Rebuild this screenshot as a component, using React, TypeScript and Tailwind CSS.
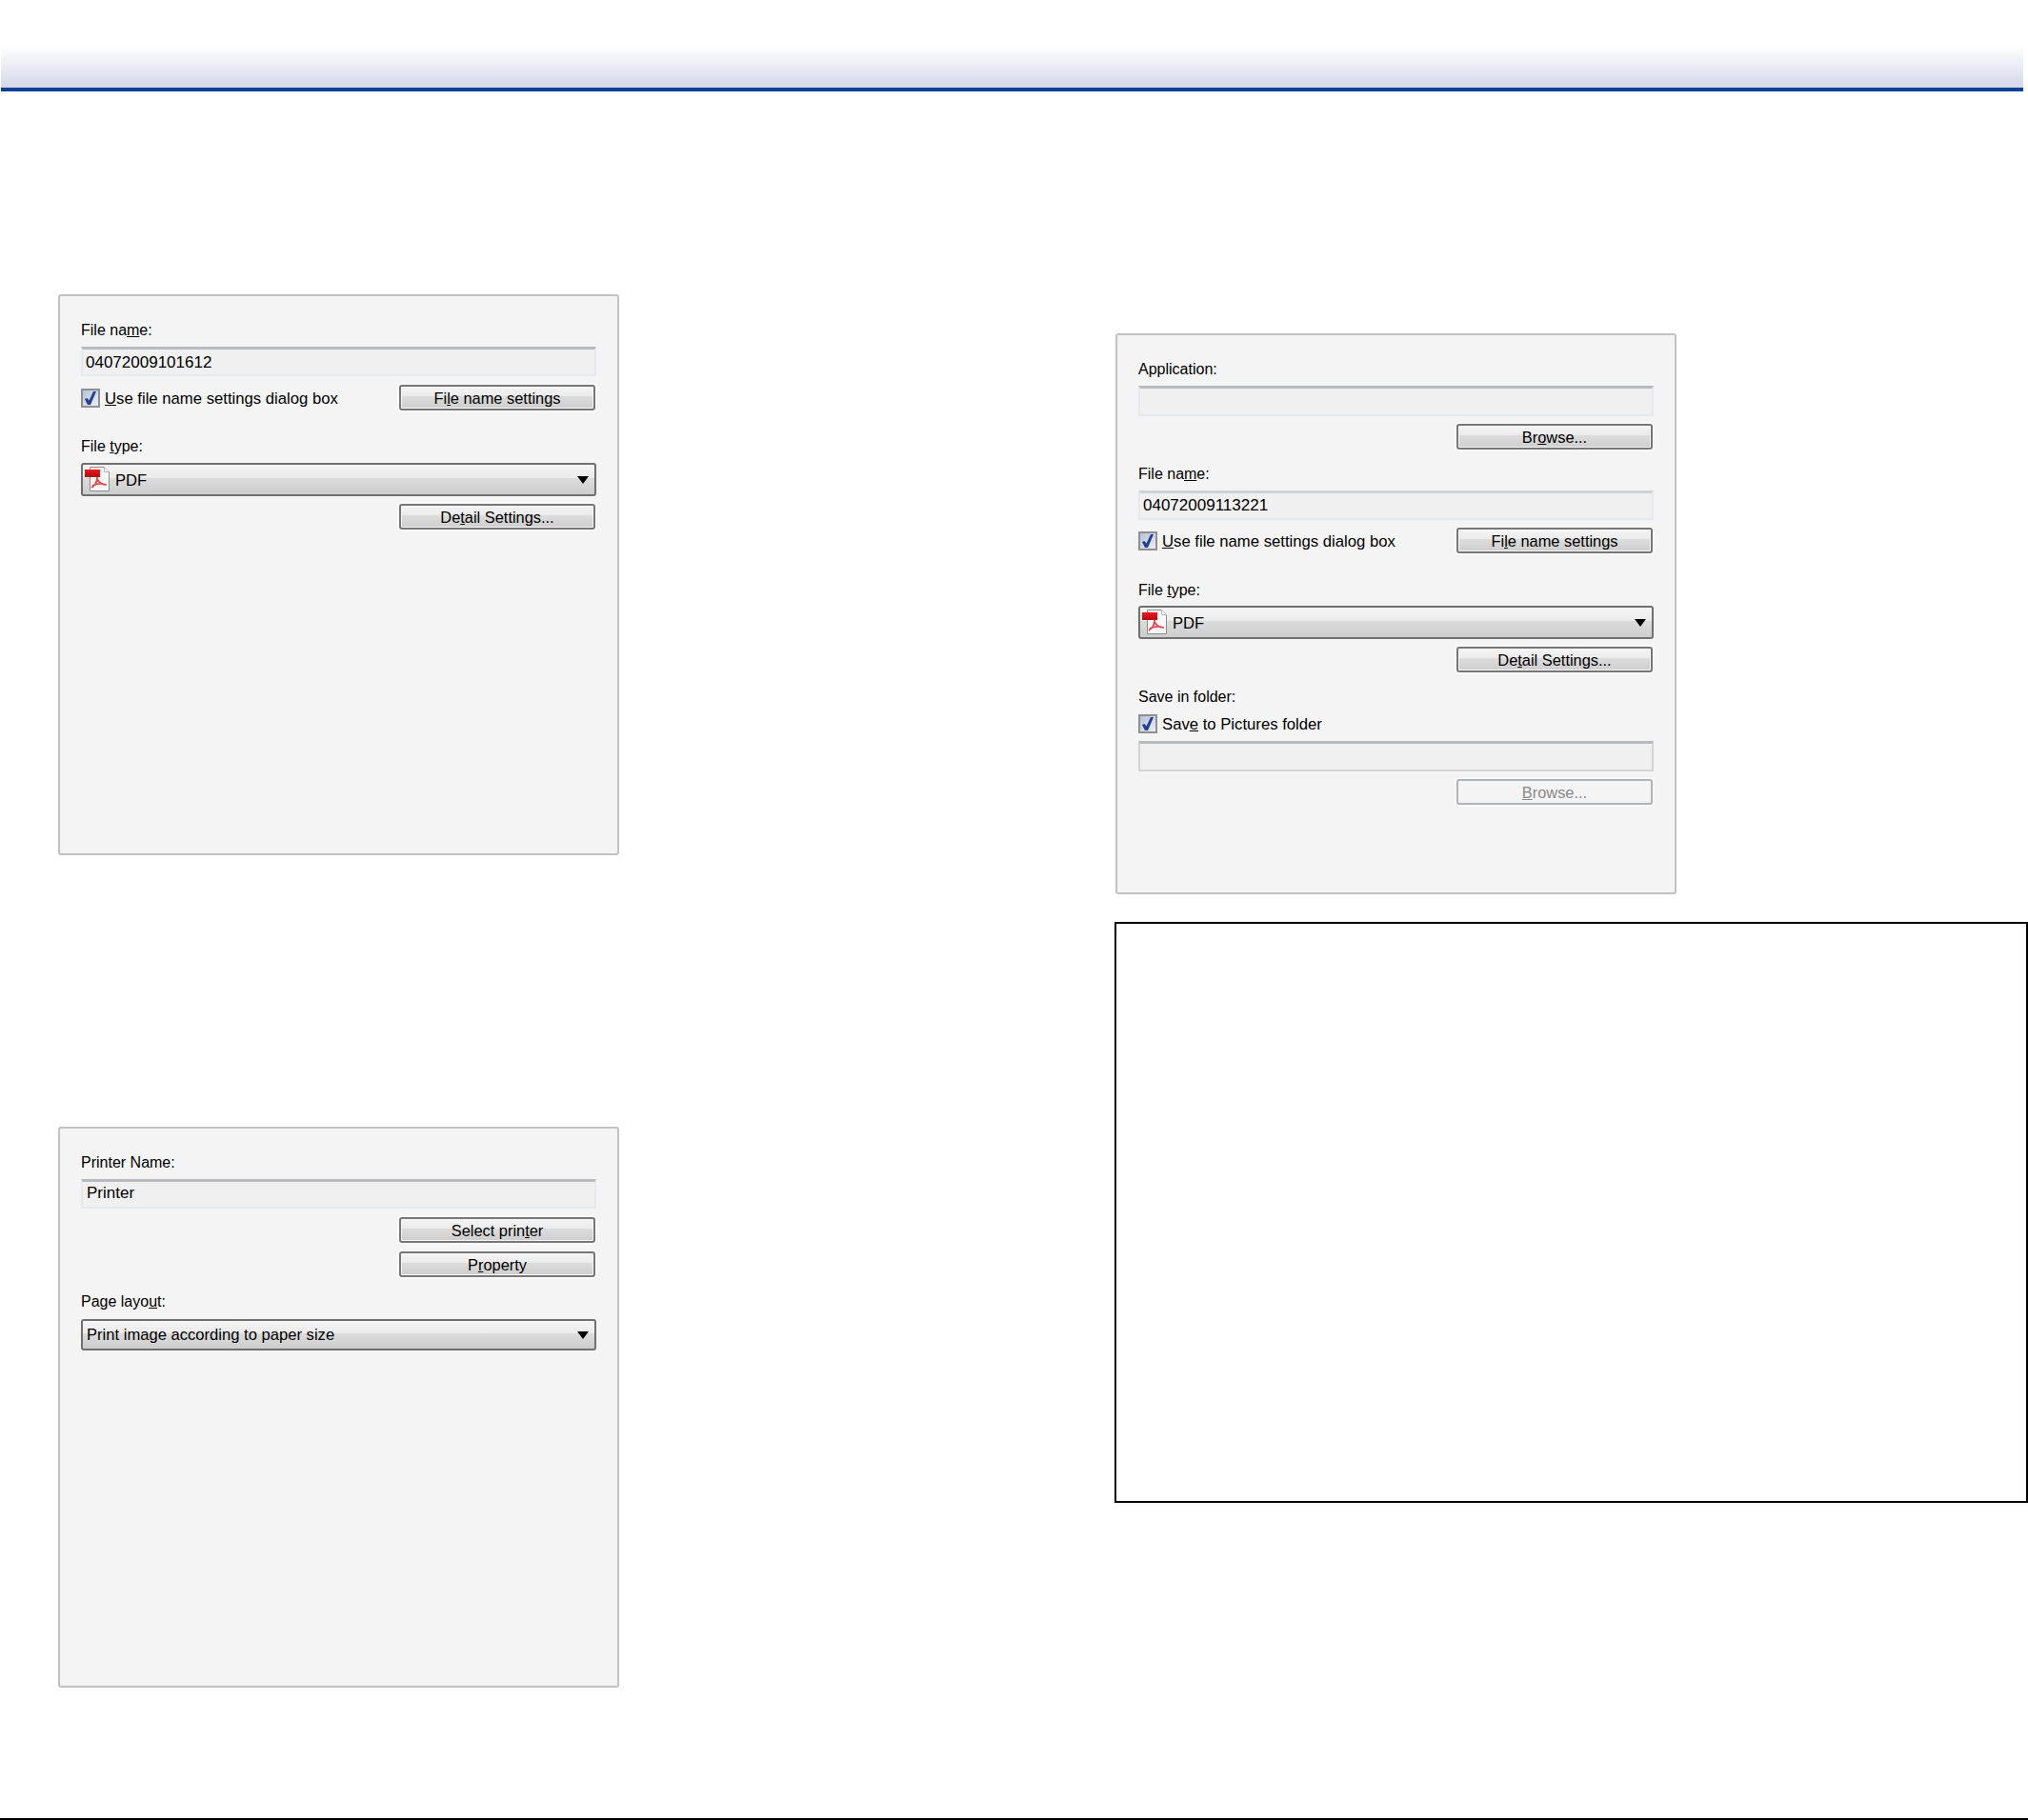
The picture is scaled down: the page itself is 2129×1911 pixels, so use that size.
import React from 'react';

const Pdf = () => (
  <svg width="26" height="26" viewBox="0 0 26 26" className="shrink-0">
    <defs>
      <linearGradient id="pdfband" x1="0" y1="0" x2="0" y2="1">
        <stop offset="0" stopColor="#f4141c" />
        <stop offset="1" stopColor="#b00c12" />
      </linearGradient>
    </defs>
    <path d="M5.500 .5h15l5 5v20h-20z" fill="#f7f7f7" stroke="#8c8c8c" />
    <path d="M20.500 .5v5h5" fill="#ffffff" stroke="#b4b4b4" />
    <rect x="0" y="3" width="16" height="8" fill="url(#pdfband)" />
    <path d="M13 11c0 5-3 9-6 11M13 13c2 4 5 6 10 6M8 20c4-2 9-3 14-1" fill="none" stroke="#e0474e" strokeWidth="1.700" />
  </svg>
);

const Arrow = () => (
  <svg width="14" height="10" viewBox="0 0 14 10" className="shrink-0">
    <path d="M1 1h12L7 9z" fill="#000000" />
  </svg>
);

const Check = () => (
  <svg width="14" height="16" viewBox="0 0 14 16">
    <path d="M1 9l3 6h3L13 1h-3L5.500 10.500 3.500 8z" fill="#25408f" />
  </svg>
);

const Label: React.FC<{ children: React.ReactNode; className?: string }> = ({ children, className = '' }) => (
  <div className={`h-5 leading-5 ${className}`}>{children}</div>
);

const Input: React.FC<{ children?: React.ReactNode; className?: string; edge?: string }> = ({
  children,
  className = '',
  edge = 'border-x-[#e6e9ee] border-b-[#e6e9ee] border-t-[#b8babd]',
}) => (
  <div className={`bg-[#f0f0f0] border-x-2 border-b-2 border-t-[3px] ${edge} text-[17px] ${className}`}>{children}</div>
);

const Btn: React.FC<{ children: React.ReactNode; className?: string; disabled?: boolean }> = ({ children, className = '', disabled }) => (
  <div className="flex justify-end pr-[1px]">
    <div
      className={
        disabled
          ? `w-[206px] h-[27px] rounded-[3px] border-2 border-[#b0b4b7] bg-[#f4f4f4] shadow-[0_0_0_2px_#f8f8f8] text-center text-[16.400px] leading-[25px] text-[#8a8a8a] ${className}`
          : `w-[206px] h-[27px] rounded-[3px] border-2 border-[#777777] bg-[linear-gradient(#f4f4f4,#ebebeb_45%,#dcdcdc_45%,#cecece)] shadow-[0_0_0_2px_#f9f9f9,inset_0_0_0_1px_#f6f6f6] text-center text-[16.400px] leading-[25px] ${className}`
      }
    >
      {children}
    </div>
  </div>
);

const Select: React.FC<{ children: React.ReactNode; className?: string }> = ({ children, className = '' }) => (
  <div className={`flex items-center justify-between rounded-[3px] border-2 border-[#707070] bg-[linear-gradient(#f4f4f4,#ebebeb_45%,#dcdcdc_45%,#cdcdcd)] pl-[2px] pr-[5px] text-[16.600px] ${className}`}>
    <div className="flex items-center gap-[6px]">{children}</div>
    <Arrow />
  </div>
);

const CheckRow: React.FC<{ children: React.ReactNode }> = ({ children }) => (
  <div className="flex items-center gap-[5px]">
    <div className="w-5 h-5 border-2 border-[#8f9090] bg-gradient-to-br from-[#b6c1da] to-[#eceef4] flex items-center justify-center">
      <Check />
    </div>
    <span className="text-[16.700px] leading-5 pt-[2px]">{children}</span>
  </div>
);

const Dialog: React.FC<{ children: React.ReactNode; className?: string }> = ({ children, className = '' }) => (
  <div className={`w-[589px] h-[589px] rounded-[3px] border-2 border-[#c2c2c2] bg-[#f4f4f4] px-[22px] ${className}`}>
    {children}
  </div>
);

const FileRow = () => (
  <div className="flex items-center justify-between">
    <CheckRow>
      <u>U</u>se file name settings dialog box
    </CheckRow>
    <Btn>
      Fi<u>l</u>e name settings
    </Btn>
  </div>
);

export default function App() {
  return (
    <div className="w-[2129px] h-[1911px] flex flex-col bg-white text-[16px] text-black font-['Liberation_Sans',sans-serif]">
      <div className="pt-12 pl-[1px] pr-[5px]">
        <div className="h-[44px] bg-gradient-to-b from-white to-[#d4d8e8]" />
        <div className="h-1 bg-[#0c3f96]" />
      </div>

      <div className="flex-1 flex">
        <div className="w-[1171px] pl-[61px] pt-[213px] flex flex-col gap-[285px]">
          <Dialog className="pt-[26px]">
            <Label className="mb-[7px]">
              File na<u>m</u>e:
            </Label>
            <Input className="h-[31px] pl-[3px] leading-[27px] mb-[9px]">04072009101612</Input>
            <FileRow />
            <Label className="mt-[28px] mb-[7px]">
              File <u>t</u>ype:
            </Label>
            <Select className="h-[35px] mb-2">
              <Pdf />
              <span className="pt-[3px]">PDF</span>
            </Select>
            <Btn>
              De<u>t</u>ail Settings...
            </Btn>
          </Dialog>

          <Dialog className="pt-[26px]">
            <Label className="mb-[7px]">Printer Name:</Label>
            <Input className="h-[31px] pl-[4px] leading-[24px] mb-[9px]">Printer</Input>
            <Btn className="mb-[9px]">
              Select prin<u>t</u>er
            </Btn>
            <Btn>
              P<u>r</u>operty
            </Btn>
            <Label className="mt-4 mb-2">
              Page layo<u>u</u>t:
            </Label>
            <Select className="h-[33px]">
              <span className="ml-[2px] pt-[1px]">Print image according to paper size</span>
            </Select>
          </Dialog>
        </div>

        <div className="flex-1 pt-[254px]">
          <Dialog className="pt-[26px]">
            <Label className="mb-[7px]">Application:</Label>
            <Input className="h-[32px] mb-2" />
            <Btn>
              Br<u>o</u>wse...
            </Btn>
            <Label className="mt-4 mb-[7px]">
              File na<u>m</u>e:
            </Label>
            <Input edge="border-x-[#e6e9ee] border-b-[#e6e9ee] border-t-[#d0d2d4]" className="h-[31px] pl-[3px] leading-[25px] mb-2">
              04072009113221
            </Input>
            <FileRow />
            <Label className="mt-[29px] mb-[6px]">
              File <u>t</u>ype:
            </Label>
            <Select className="h-[35px] mb-2">
              <Pdf />
              <span className="pt-[3px]">PDF</span>
            </Select>
            <Btn>
              De<u>t</u>ail Settings...
            </Btn>
            <Label className="mt-4 mb-[7px]">Save in folder:</Label>
            <CheckRow>
              Sav<u>e</u> to Pictures folder
            </CheckRow>
            <Input edge="border-x-[#d2d4d6] border-b-[#d2d4d6] border-t-[#b8babd]" className="h-[32px] mt-[7px] mb-2" />
            <Btn disabled>
              <u>B</u>rowse...
            </Btn>
          </Dialog>

          <div className="mt-[29px] -ml-[1px] h-[610px] border-2 border-black" />
        </div>
      </div>

      <div className="h-[2px] bg-black" />
    </div>
  );
}
